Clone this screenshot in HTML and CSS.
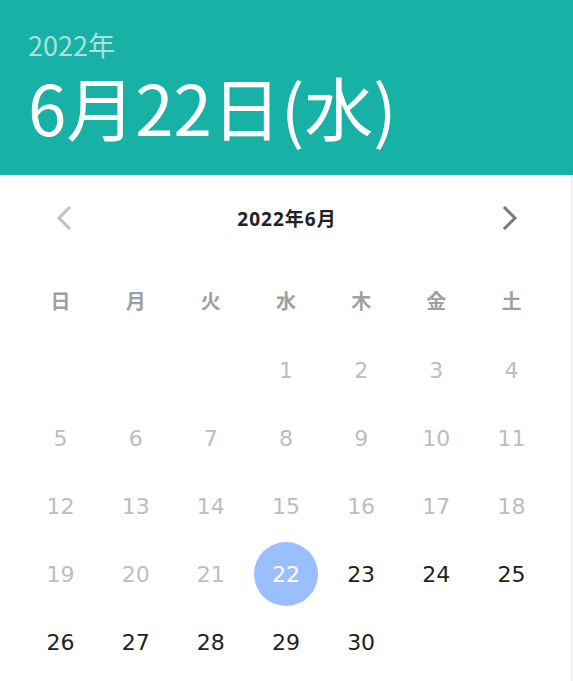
FILE: index.html
```html
<!DOCTYPE html>
<html>
<head>
    <meta charset="utf-8" />
    <title>日付選択</title>
    <link rel="stylesheet" href="styles.css">
</head>
<body>
<div class="picker">
    <div class="picker-head">
        <div class="head-year">2022年</div>
        <div class="head-date">6月22日(水)</div>
    </div>
    <div class="calendar">
        <div class="month-nav">
            <svg class="nav-btn nav-prev" width="24" height="24" viewBox="0 0 24 24"><polyline points="16,2 6,12 16,22" /></svg>
            <span class="month-title">2022年6月</span>
            <svg class="nav-btn nav-next" width="24" height="24" viewBox="0 0 24 24"><polyline points="8,2 18,12 8,22" /></svg>
        </div>
        <div class="weekdays">
            <span>日</span><span>月</span><span>火</span><span>水</span><span>木</span><span>金</span><span>土</span>
        </div>
        <div class="days">
            <span></span><span></span><span></span>
            <span class="day past">1</span><span class="day past">2</span><span class="day past">3</span><span class="day past">4</span>
            <span class="day past">5</span><span class="day past">6</span><span class="day past">7</span><span class="day past">8</span><span class="day past">9</span><span class="day past">10</span><span class="day past">11</span>
            <span class="day past">12</span><span class="day past">13</span><span class="day past">14</span><span class="day past">15</span><span class="day past">16</span><span class="day past">17</span><span class="day past">18</span>
            <span class="day past">19</span><span class="day past">20</span><span class="day past">21</span><span class="day selected">22</span><span class="day">23</span><span class="day">24</span><span class="day">25</span>
            <span class="day">26</span><span class="day">27</span><span class="day">28</span><span class="day">29</span><span class="day">30</span>
        </div>
    </div>
</div>
</body>
</html>
```

FILE: styles.css
```css
html, body {
    margin: 0;
    padding: 0;
    background: #FFF;
}

body {
    font-family: "Noto Sans CJK JP", "Noto Sans", sans-serif;
}

.picker {
    width: 573px;
    height: 681px;
    overflow: hidden;
}

.picker-head {
    background: #18B1A5;
    height: 175px;
    box-sizing: border-box;
    padding: 28px 28px 0;
    color: #FFF;
}

.head-year {
    color: #A8E3DB;
    font-size: 27px;
    line-height: 34px;
}

.head-date {
    font-size: 69px;
    line-height: 84px;
    margin-top: 2px;
}

.calendar {
    width: 572px;
    height: 506px;
    border-right: 1px solid #E8E8E8;
    box-sizing: border-box;
    padding-top: 19px;
}

.month-nav {
    display: flex;
    align-items: center;
    justify-content: space-between;
    height: 48px;
    padding: 0 50px 0 53px;
}

.nav-btn polyline {
    fill: none;
    stroke-width: 3;
    stroke-linecap: square;
}

.nav-prev polyline {
    stroke: #C2C2C2;
}

.nav-next polyline {
    stroke: #777;
}

.month-title {
    font-family: "Open Sans", "Noto Sans CJK JP", sans-serif;
    font-size: 19px;
    font-weight: bold;
    letter-spacing: 1px;
    color: #222;
}

.weekdays, .days {
    display: grid;
    grid-template-columns: repeat(7, 1fr);
    padding: 0 22px 0 23px;
}

.weekdays {
    margin-top: 28px;
    height: 60px;
    align-items: center;
    text-align: center;
    color: #A0A0A0;
    font-size: 20px;
    font-weight: bold;
}

.days {
    margin-top: 6px;
    grid-auto-rows: 68px;
}

.day {
    display: flex;
    align-items: center;
    justify-content: center;
    font-family: "DejaVu Sans", Verdana, sans-serif;
    font-size: 22px;
    color: #222;
}

.day.past {
    color: #BDBDBD;
}

.day.selected {
    justify-self: center;
    align-self: center;
    width: 64px;
    height: 64px;
    border-radius: 50%;
    background: #99BFFF;
    color: #FFF;
}
```
